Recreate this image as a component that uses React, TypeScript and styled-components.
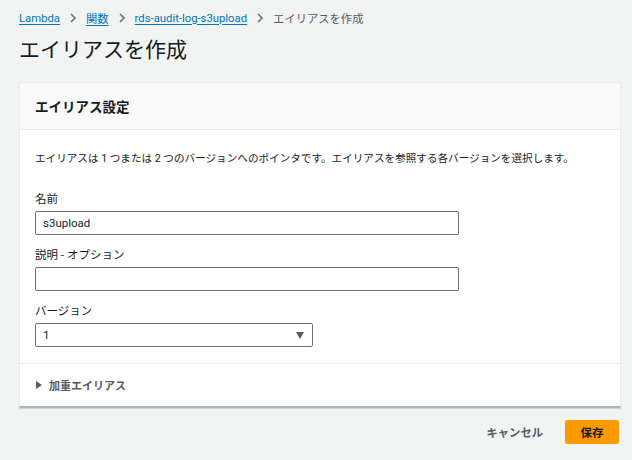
import styled, { createGlobalStyle } from 'styled-components';

const GlobalStyle = createGlobalStyle`
  html, body {
    margin: 0;
    padding: 0;
    background: #f2f3f3;
  }
  body {
    font-family: Roboto, 'Noto Sans CJK JP', 'Liberation Sans', sans-serif;
    color: #16191f;
  }
`;

const Page = styled.div`
  width: 632px;
  height: 460px;
  box-sizing: border-box;
  padding: 8px 13px 0 19px;
  overflow: hidden;
`;

const Breadcrumbs = styled.nav`
  display: flex;
  align-items: center;
  height: 20px;
  font-size: 11.3px;
  gap: 9px;
`;

const Crumb = styled.a`
  color: #0073bb;
  text-decoration: underline;
  text-underline-offset: 2px;
`;

const Current = styled.span`
  color: #545b64;
`;

const Chevron = () => (
  <svg width="8" height="10" viewBox="0 0 8 10">
    <path d="M2 1 L6 5 L2 9" fill="none" stroke="#687078" strokeWidth="1.6" />
  </svg>
);

const Title = styled.h1`
  margin: 6px 0 0;
  font-size: 21px;
  font-weight: 400;
  line-height: 32px;
  color: #16191f;
`;

const Card = styled.section`
  margin-top: 16px;
  width: 600px;
  background: #fff;
  border: 1px solid #eaeded;
  border-bottom: 2px solid #aab7b8;
  box-shadow: 0 1px 1px rgba(0, 27, 43, 0.12);
`;

const CardHeader = styled.header`
  background: #fafafa;
  border-bottom: 1px solid #eaeded;
  height: 46px;
  display: flex;
  align-items: center;
  padding: 0 15px;
  font-size: 13.5px;
  font-weight: 700;
`;

const CardBody = styled.div`
  padding: 21px 15px 16px;
  border-bottom: 1px solid #eaeded;
`;

const Description = styled.p`
  margin: 0 0 24px;
  font-size: 10.6px;
  line-height: 16px;
`;

const Field = styled.div`
  display: flex;
  flex-direction: column;
  margin-bottom: 12px;

  &:last-child {
    margin-bottom: 0;
  }
`;

const Label = styled.label`
  font-size: 11.5px;
  line-height: 16px;
  margin-bottom: 4px;
`;

const Input = styled.div<{ $width: number }>`
  box-sizing: border-box;
  width: ${({ $width }) => $width}px;
  height: 24px;
  border: 1px solid #687078;
  border-radius: 2px;
  padding: 0 7px;
  display: flex;
  align-items: center;
  justify-content: space-between;
  font-size: 11.5px;
`;

const Caret = styled.span`
  width: 0;
  height: 0;
  border-left: 4.5px solid transparent;
  border-right: 4.5px solid transparent;
  border-top: 7px solid #545b64;
  margin-right: 1px;
`;

const Expander = styled.div`
  height: 42px;
  display: flex;
  align-items: center;
  padding: 0 15px;
  font-size: 11px;
  font-weight: 700;
  color: #545b64;
  gap: 7px;
`;

const Tri = styled.span`
  width: 0;
  height: 0;
  border-top: 4px solid transparent;
  border-bottom: 4px solid transparent;
  border-left: 6px solid #545b64;
  margin-left: 1px;
`;

const Actions = styled.div`
  display: flex;
  justify-content: flex-end;
  align-items: center;
  gap: 22px;
  margin-top: 12px;
  width: 600px;
`;

const LinkButton = styled.button`
  border: none;
  background: none;
  font: inherit;
  font-size: 11.3px;
  font-weight: 700;
  color: #545b64;
  padding: 0;
`;

const PrimaryButton = styled.button`
  border: none;
  background: #ff9900;
  border-radius: 2px;
  width: 54px;
  height: 24px;
  font: inherit;
  font-size: 11.5px;
  font-weight: 700;
  color: #16191f;
`;

export default function App() {
  return (
    <>
      <GlobalStyle />
      <Page>
        <Breadcrumbs>
          <Crumb>Lambda</Crumb>
          <Chevron />
          <Crumb>関数</Crumb>
          <Chevron />
          <Crumb>rds-audit-log-s3upload</Crumb>
          <Chevron />
          <Current>エイリアスを作成</Current>
        </Breadcrumbs>
        <Title>エイリアスを作成</Title>
        <Card>
          <CardHeader>エイリアス設定</CardHeader>
          <CardBody>
            <Description>
              エイリアスは 1 つまたは 2 つのバージョンへのポインタです。エイリアスを参照する各バージョンを選択します。
            </Description>
            <Field>
              <Label>名前</Label>
              <Input $width={424}>s3upload</Input>
            </Field>
            <Field>
              <Label>説明 - オプション</Label>
              <Input $width={424} />
            </Field>
            <Field>
              <Label>バージョン</Label>
              <Input $width={278}>
                1
                <Caret />
              </Input>
            </Field>
          </CardBody>
          <Expander>
            <Tri />
            加重エイリアス
          </Expander>
        </Card>
        <Actions>
          <LinkButton>キャンセル</LinkButton>
          <PrimaryButton>保存</PrimaryButton>
        </Actions>
      </Page>
    </>
  );
}
